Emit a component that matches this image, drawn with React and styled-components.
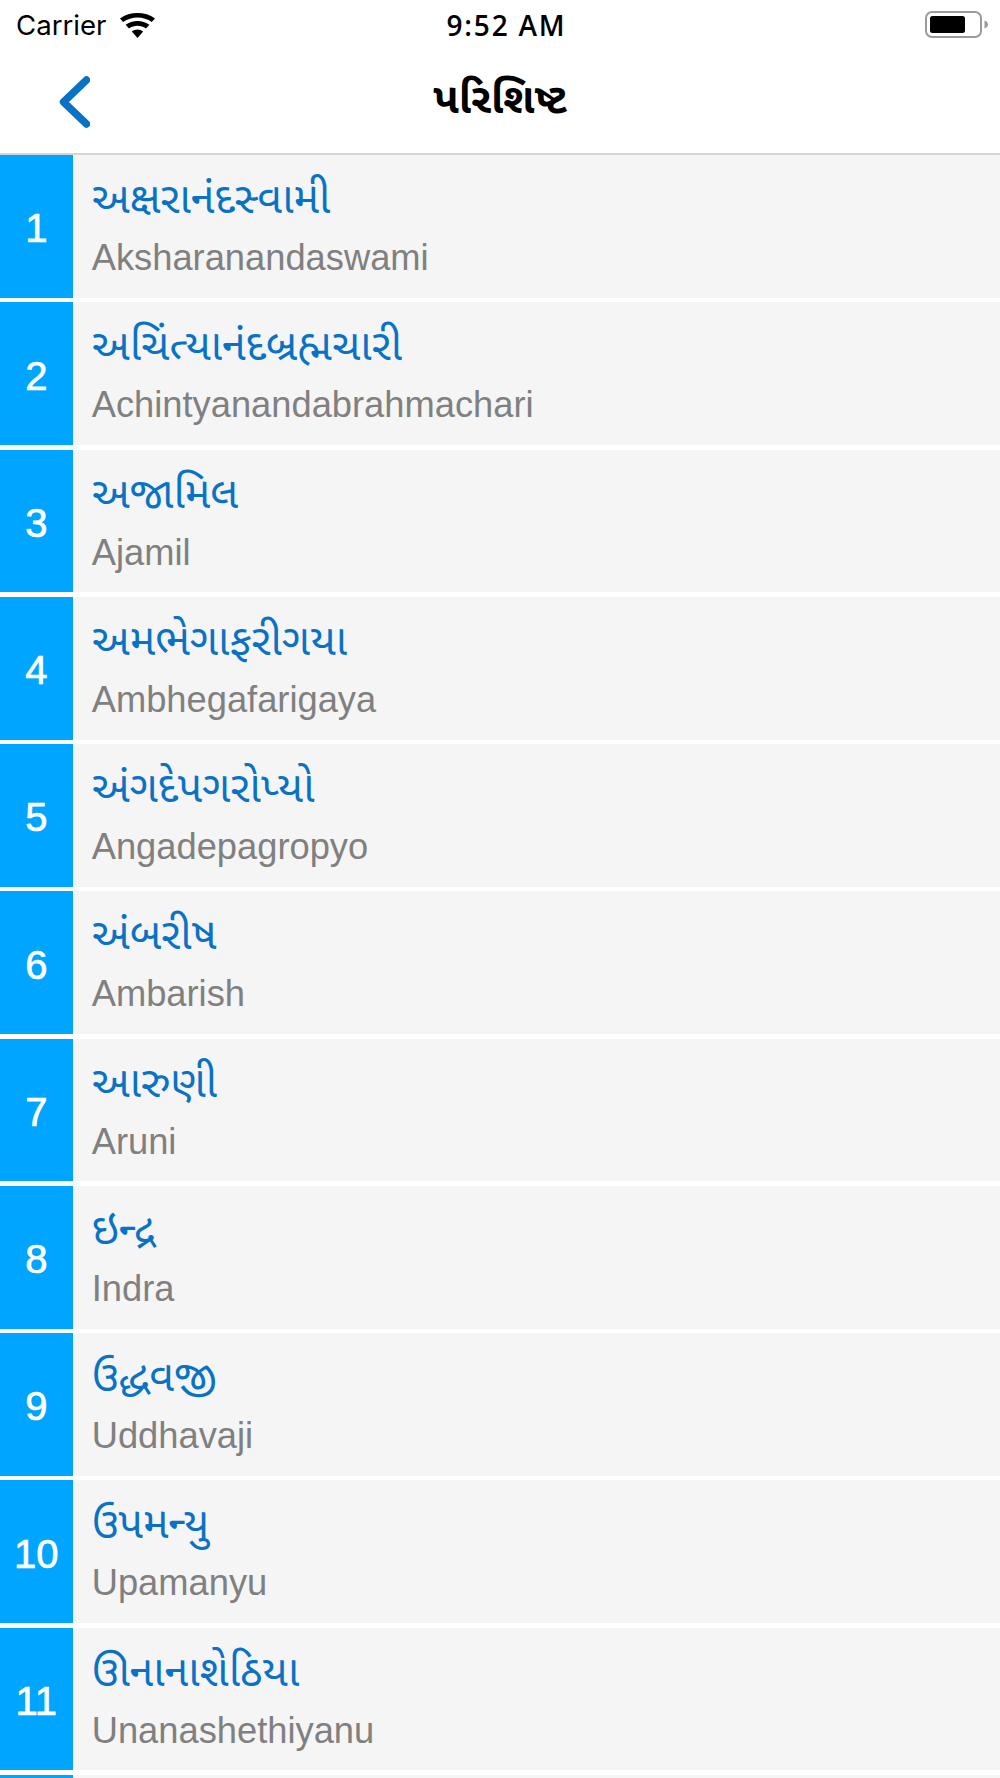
import React from 'react'
import styled, { createGlobalStyle } from 'styled-components'

const GlobalStyle = createGlobalStyle`
  html, body {
    margin: 0;
    padding: 0;
    background: #fff;
  }
  body {
    font-family: "Liberation Sans", Arial, sans-serif;
  }
`

const Page = styled.div`
  width: 1000px;
  height: 1778px;
  overflow: hidden;
  background: #fff;
`

const StatusBar = styled.div`
  height: 48px;
  display: grid;
  grid-template-columns: 1fr auto 1fr;
  align-items: center;
  padding: 2px 11px 0 16px;
  box-sizing: border-box;
  color: #000;
`

const Carrier = styled.div`
  display: flex;
  align-items: center;
  gap: 14px;
  font-family: Inter, "Liberation Sans", sans-serif;
  font-size: 27.6px;
`

const Clock = styled.div`
  margin-left: 8px;
  font-family: "Open Sans", "Liberation Sans", sans-serif;
  font-size: 28px;
  font-weight: 600;
  letter-spacing: 1.8px;
`

const BatteryWrap = styled.div`
  justify-self: end;
  display: flex;
  align-items: center;
`

const NavBar = styled.div`
  height: 107px;
  box-sizing: border-box;
  border-bottom: 2px solid #d4d4d4;
  display: grid;
  grid-template-columns: 1fr auto 1fr;
  align-items: center;
  padding: 2px 59px 0;
`

const BackIcon = styled.svg`
  display: block;
  width: 31px;
  height: 52px;
`

const Title = styled.div`
  font-family: "Noto Sans Gujarati", "Noto Sans", "Liberation Sans", sans-serif;
  font-size: 42px;
  font-weight: 700;
  color: #000;
  padding-top: 2px;
`

const List = styled.div`
  display: flex;
  flex-direction: column;
  gap: 4.5px;
`

const Row = styled.div`
  height: 142.75px;
  flex: none;
  display: flex;
  background: #f5f5f5;
`

const Badge = styled.div`
  width: 72.7px;
  flex: none;
  box-sizing: border-box;
  padding-top: 5px;
  display: flex;
  align-items: center;
  justify-content: center;
  background: #00a5ff;
  color: #fff;
  font-family: "Liberation Sans", Arial, sans-serif;
  font-size: 40px;
  -webkit-text-stroke: 0.7px #fff;
`

const Names = styled.div`
  display: flex;
  flex-direction: column;
  padding: 13px 0 0 19px;
`

const Gujarati = styled.div`
  height: 68px;
  line-height: 70px;
  font-family: "Noto Sans Gujarati", "Noto Sans", "Liberation Sans", sans-serif;
  font-size: 43px;
  font-weight: 400;
  color: #0a72c4;
  white-space: nowrap;
`

const Latin = styled.div`
  height: 44px;
  line-height: 44px;
  font-family: "Liberation Sans", Arial, sans-serif;
  font-size: 36.3px;
  color: #808080;
  white-space: nowrap;
`

const people = [
  ['અક્ષરાનંદસ્વામી', 'Aksharanandaswami'],
  ['અચિંત્યાનંદબ્રહ્મચારી', 'Achintyanandabrahmachari'],
  ['અજામિલ', 'Ajamil'],
  ['અમભેગાફરીગયા', 'Ambhegafarigaya'],
  ['અંગદેપગરોપ્યો', 'Angadepagropyo'],
  ['અંબરીષ', 'Ambarish'],
  ['આરુણી', 'Aruni'],
  ['ઇન્દ્ર', 'Indra'],
  ['ઉદ્ધવજી', 'Uddhavaji'],
  ['ઉપમન્યુ', 'Upamanyu'],
  ['ઊનાનાશેઠિયા', 'Unanashethiyanu'],
]

const WifiIcon = () => (
  <svg width="35" height="25" viewBox="0 0 35 25">
    <path d="M17.5 25 L11.8 18.6 C15 15.9 20 15.9 23.2 18.6 Z" fill="#000" />
    <path d="M9 15.5 L5.6 11.7 C12.2 6.6 22.8 6.6 29.4 11.7 L26 15.5 C21 11.7 14 11.7 9 15.5 Z" fill="#000" />
    <path d="M3.2 9 L0 5.5 C10 -1.8 25 -1.8 35 5.5 L31.8 9 C23.5 3 11.5 3 3.2 9 Z" fill="#000" />
  </svg>
)

const BatteryIcon = () => (
  <svg width="64" height="28" viewBox="0 0 64 28">
    <rect x="1" y="1" width="55" height="25" rx="6" fill="none" stroke="#9b9b9b" strokeWidth="2" />
    <rect x="5" y="5" width="35" height="17" rx="2.5" fill="#000" />
    <path d="M59.5 9.5 C62 10.5 63 12 63 13.5 C63 15 62 16.5 59.5 17.5 Z" fill="#9b9b9b" />
  </svg>
)

const App = () => (
  <Page>
    <GlobalStyle />
    <StatusBar>
      <Carrier>
        Carrier
        <WifiIcon />
      </Carrier>
      <Clock>9:52 AM</Clock>
      <BatteryWrap>
        <BatteryIcon />
      </BatteryWrap>
    </StatusBar>
    <NavBar>
      <BackIcon viewBox="0 0 31 52">
        <path d="M27.5 4 L4.5 26 L27.5 48" fill="none" stroke="#0a72c4" strokeWidth="7.5" strokeLinecap="round" strokeLinejoin="round" />
      </BackIcon>
      <Title>પરિશિષ્ટ</Title>
    </NavBar>
    <List>
      {people.map(([gu, en], i) => (
        <Row key={en}>
          <Badge>{i + 1}</Badge>
          <Names>
            <Gujarati>{gu}</Gujarati>
            <Latin>{en}</Latin>
          </Names>
        </Row>
      ))}
      <Row>
        <Badge />
      </Row>
    </List>
  </Page>
)

export default App
